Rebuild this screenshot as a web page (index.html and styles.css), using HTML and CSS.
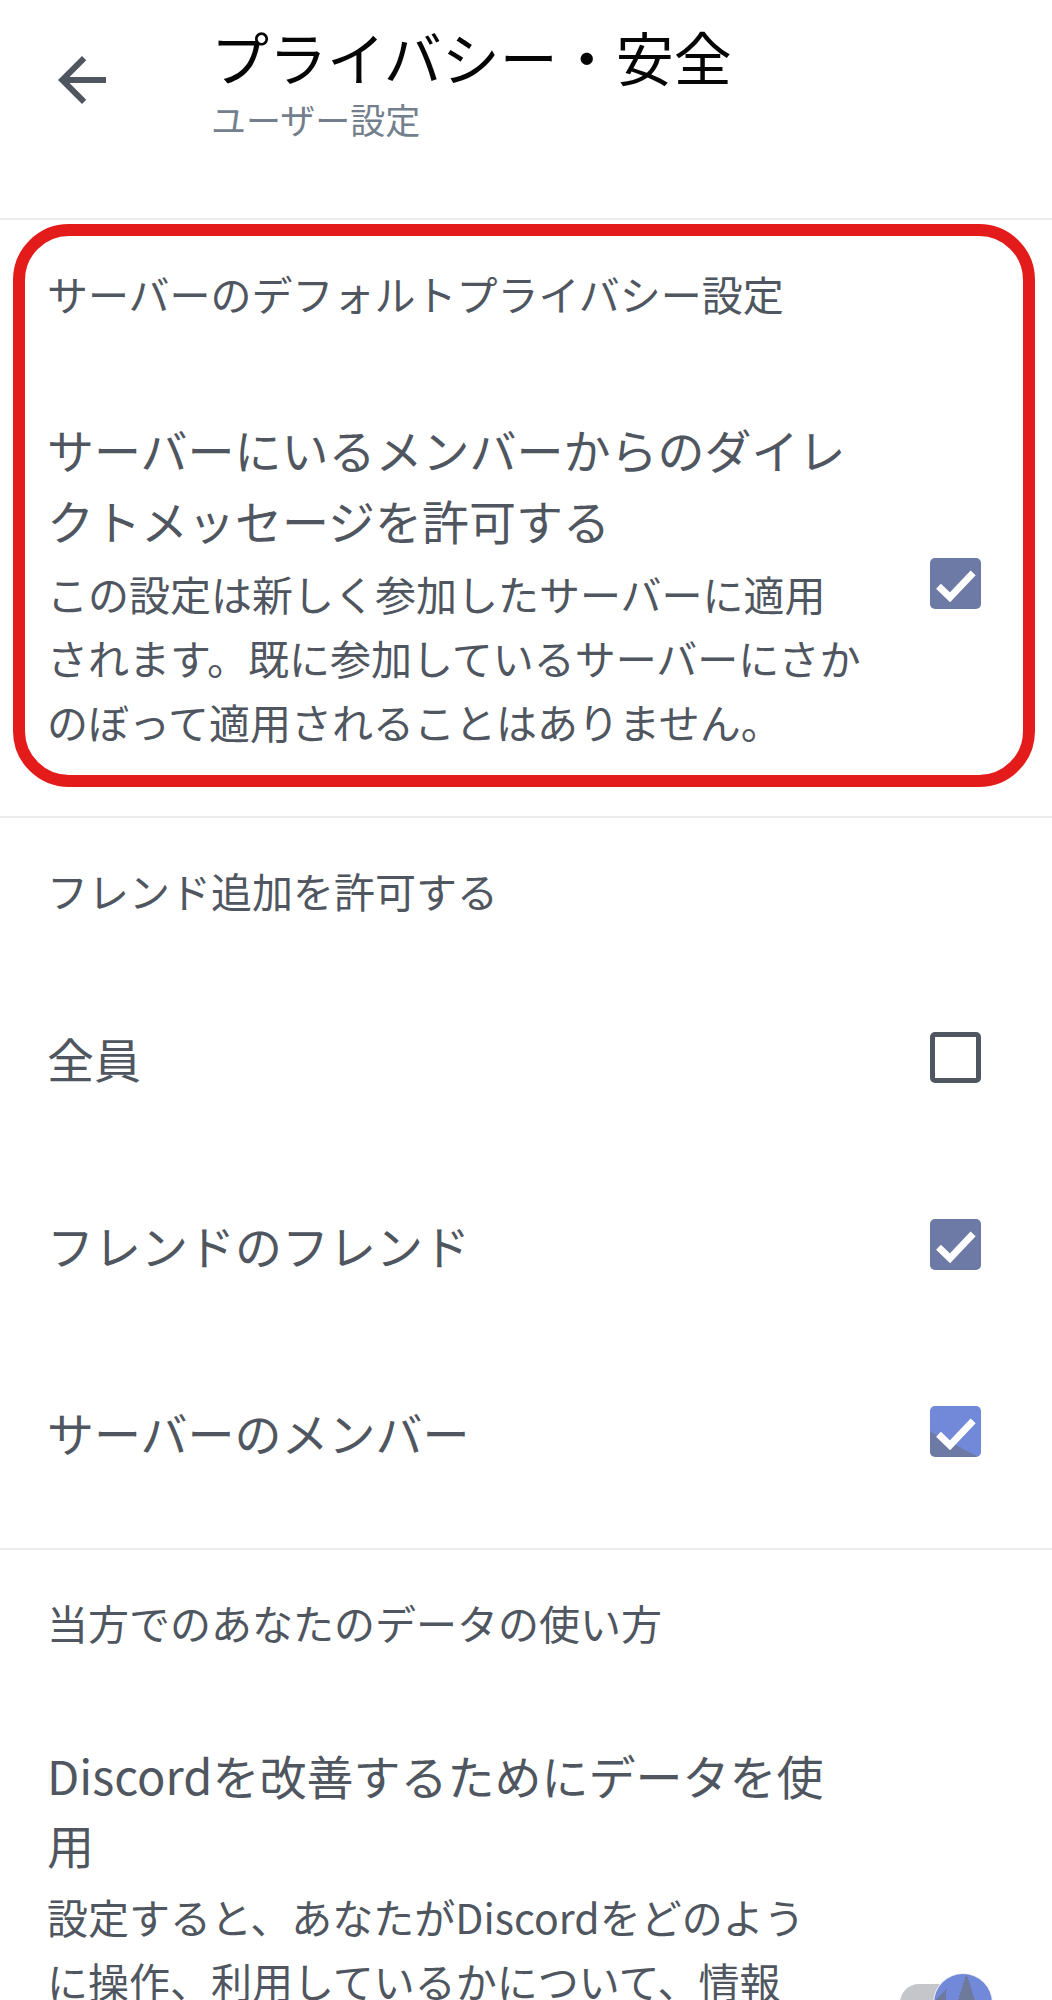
FILE: index.html
```html
<!DOCTYPE html>
<html lang="ja">
<head>
  <meta charset="UTF-8">
  <meta name="viewport" content="width=device-width, initial-scale=1.0">
  <title>プライバシー・安全</title>
  <link rel="stylesheet" href="styles.css">
</head>
<body>
  <!-- Header -->
  <header class="topbar">
    <button class="back-btn" aria-label="戻る">
      <svg viewBox="0 0 24 24"><path d="M20 11H7.83l5.59-5.59L12 4l-8 8 8 8 1.41-1.41L7.83 13H20v-2z"/></svg>
    </button>
    <div class="titles">
      <h1>プライバシー・安全</h1>
      <p>ユーザー設定</p>
    </div>
  </header>

  <!-- Server default privacy -->
  <section class="section section-first">
    <div class="highlight">
      <h2 class="section-title">サーバーのデフォルトプライバシー設定</h2>
      <div class="option option-multi">
        <div class="option-text">
          <div class="option-label">サーバーにいるメンバーからのダイレ<br>クトメッセージを許可する</div>
          <div class="option-desc">この設定は新しく参加したサーバーに適用<br>されます。既に参加しているサーバーにさか<br>のぼって適用されることはありません。</div>
        </div>
        <span class="checkbox checked">
          <svg viewBox="0 0 24 24"><path d="M4 13.3l5.4 5.2L20.3 7"/></svg>
        </span>
      </div>
    </div>
  </section>

  <!-- Friend requests -->
  <section class="section">
    <h2 class="section-title">フレンド追加を許可する</h2>
    <div class="option option-single">
      <div class="option-label">全員</div>
      <span class="checkbox"></span>
    </div>
    <div class="option option-single">
      <div class="option-label">フレンドのフレンド</div>
      <span class="checkbox checked">
        <svg viewBox="0 0 24 24"><path d="M4 13.3l5.4 5.2L20.3 7"/></svg>
      </span>
    </div>
    <div class="option option-single">
      <div class="option-label">サーバーのメンバー</div>
      <span class="checkbox checked half">
        <svg viewBox="0 0 24 24"><path d="M4 13.3l5.4 5.2L20.3 7"/></svg>
      </span>
    </div>
  </section>

  <!-- Data usage -->
  <section class="section">
    <h2 class="section-title">当方でのあなたのデータの使い方</h2>
    <div class="option option-multi option-toggle">
      <div class="option-text">
        <div class="option-label label-tight">Discordを改善するためにデータを使<br>用</div>
        <div class="option-desc">設定すると、あなたがDiscordをどのよう<br>に操作、利用しているかについて、情報<br>を収集し、サービスの改善に使用するこ<br>とを当方に許可します。</div>
      </div>
      <span class="toggle on">
        <span class="toggle-track"></span>
        <span class="toggle-knob"></span>
      </span>
    </div>
  </section>
</body>
</html>
```

FILE: styles.css
```css
* {
  margin: 0;
  padding: 0;
  box-sizing: border-box;
}

body {
  font-family: "Noto Sans CJK JP", "Noto Sans", sans-serif;
  background-color: #fff;
  color: #4f5660;
}

/* Header */
.topbar {
  display: flex;
  align-items: flex-start;
  height: 220px;
  padding-left: 46px;
  border-bottom: 2px solid #ebedef;
}

.back-btn {
  width: 72px;
  height: 72px;
  margin-top: 44px;
  background: none;
  border: none;
  color: #4f5660;
}

.back-btn svg {
  display: block;
  width: 72px;
  height: 72px;
  fill: currentColor;
}

.titles {
  margin-left: 93px;
  padding-top: 20px;
}

.titles h1 {
  font-size: 58px;
  line-height: 72px;
  font-weight: 400;
  color: #060607;
}

.titles p {
  font-size: 35px;
  line-height: 44px;
  margin-top: 5px;
  color: #747f8d;
}

/* Sections */
.section {
  border-bottom: 2px solid #ebedef;
  padding-bottom: 23px;
}

.section-first {
  padding-bottom: 0;
}

.section-title {
  font-size: 41px;
  line-height: 56px;
  font-weight: 400;
  color: #4f5660;
  padding: 44px 0 0 47px;
}

.section-title + .option-single {
  margin-top: 46px;
}

.section-title + .option-multi {
  margin-top: 90px;
}

.highlight {
  margin: 4px 17px 29px 13px;
  border: 12px solid #e31b1b;
  border-radius: 56px;
  padding: 29px 42px 22px 0;
}

.highlight .section-title {
  padding-top: 0;
  padding-left: 22px;
}

.highlight .option {
  padding: 0;
  padding-left: 22px;
}

.highlight .section-title + .option-multi {
  margin-top: 92px;
}

/* Options */
.option {
  display: flex;
  align-items: center;
  justify-content: space-between;
  padding: 0 71px 0 47px;
}

.option-single {
  height: 187px;
}

.option-label {
  font-size: 47px;
  line-height: 71px;
  color: #4f5660;
}

.label-tight {
  line-height: 69px;
}

.option-desc {
  font-size: 41px;
  line-height: 64px;
  margin-top: 6px;
  color: #4f5660;
}

.checkbox {
  flex: none;
  width: 51px;
  height: 51px;
  border: 5px solid #4f5660;
  border-radius: 5px;
}

.checkbox.checked {
  border: none;
  background-color: #6d7aa6;
}

.checkbox.half {
  background: linear-gradient(28deg, #6d7aa6 33%, #7289da 33%);
}

.checkbox svg {
  display: block;
  width: 51px;
  height: 51px;
  fill: none;
  stroke: #fff;
  stroke-width: 3.3;
  stroke-linecap: butt;
}

/* Toggle */
.option-toggle {
  align-items: flex-start;
}

.toggle {
  flex: none;
  position: relative;
  width: 92px;
  height: 58px;
  margin-top: 234px;
  margin-right: -11px;
}

.toggle-track {
  position: absolute;
  left: 0;
  top: 10px;
  width: 86px;
  height: 38px;
  border-radius: 19px;
  background-color: #c4c6ca;
}

.toggle-knob {
  position: absolute;
  right: 0;
  top: 0;
  width: 58px;
  height: 58px;
  border-radius: 50%;
  background:
    conic-gradient(from 162deg at 56% 0%, #6e7a9c 0 36deg, transparent 36deg),
    conic-gradient(from 185deg at 22% 25%, #6e7a9c 0 40deg, transparent 40deg),
    #7289da;
  box-shadow: 0 0 0 1px #eef0f4;
}
```
